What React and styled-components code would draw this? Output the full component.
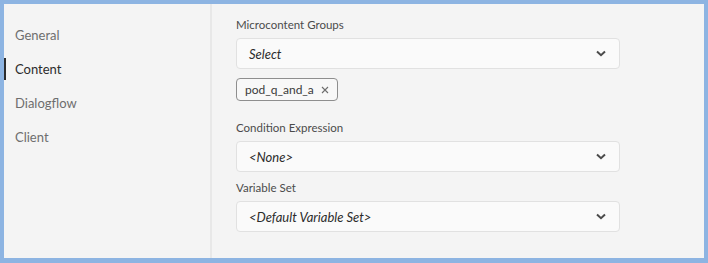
import React from 'react'
import styled, { createGlobalStyle } from 'styled-components'

const GlobalStyle = createGlobalStyle`
  html, body {
    margin: 0;
    padding: 0;
    background: #8db4e2;
  }
  body {
    font-family: Lato, "Noto Sans", sans-serif;
    -webkit-font-smoothing: antialiased;
  }
`

const Frame = styled.div`
  box-sizing: border-box;
  width: 708px;
  height: 263px;
  border: 4px solid #8db4e2;
  border-bottom-width: 5px;
  background: #f4f4f4;
  display: flex;
`

const Sidebar = styled.nav`
  width: 206px;
  flex-shrink: 0;
  border-right: 2px solid #e8e8e8;
  padding-top: 14px;
  display: flex;
  flex-direction: column;
`

const NavItem = styled.div`
  height: 22px;
  margin: 6px 0;
  display: flex;
  align-items: center;
  padding-left: 9px;
  font-size: 13px;
  color: ${p => (p.active ? '#2c2c2c' : '#6e6e6e')};
  border-left: 2px solid ${p => (p.active ? '#2c2c2c' : 'transparent')};
`

const Main = styled.main`
  flex: 1;
  padding: 11px 0 0 24px;
  display: flex;
  flex-direction: column;
`

const Field = styled.div`
  width: 384px;
  display: flex;
  flex-direction: column;
  margin-bottom: ${p => p.gap || 0}px;
`

const Label = styled.div`
  font-size: 11.5px;
  color: #4b4b4b;
  height: 23px;
  line-height: 20px;
`

const SelectBox = styled.div`
  box-sizing: border-box;
  height: 31px;
  background: #fafafa;
  border: 1px solid #e1e1e1;
  border-radius: 4px;
  display: flex;
  align-items: center;
  justify-content: space-between;
  padding: 0 13px 0 12px;
  font-size: 13px;
  font-style: italic;
  color: #2c2c2c;
`

const Tags = styled.div`
  display: flex;
  margin-top: 9px;
`

const Tag = styled.div`
  box-sizing: border-box;
  height: 23px;
  border: 1px solid #8e8e8e;
  border-radius: 4px;
  display: flex;
  align-items: center;
  gap: 7px;
  padding: 0 8px;
  font-size: 12px;
  color: #3a3a3a;
  background: #f8f8f8;
`

const Chevron = () => (
  <svg width="10" height="7" viewBox="0 0 10 7">
    <path d="M1 1.5 L5 5.2 L9 1.5" fill="none" stroke="#4b4b4b" strokeWidth="2" />
  </svg>
)

const Cross = () => (
  <svg width="8" height="8" viewBox="0 0 8 8">
    <path d="M1 1 L7 7 M7 1 L1 7" stroke="#6e6e6e" strokeWidth="1.1" />
  </svg>
)

const Select = ({ value }) => (
  <SelectBox>
    <span>{value}</span>
    <Chevron />
  </SelectBox>
)

export default function App() {
  return (
    <>
      <GlobalStyle />
      <Frame>
        <Sidebar>
          {['General', 'Content', 'Dialogflow', 'Client'].map(n => (
            <NavItem key={n} active={n === 'Content'}>{n}</NavItem>
          ))}
        </Sidebar>
        <Main>
          <Field gap={17}>
            <Label>Microcontent Groups</Label>
            <Select value="Select" />
            <Tags>
              <Tag>pod_q_and_a <Cross /></Tag>
            </Tags>
          </Field>
          <Field gap={6}>
            <Label>Condition Expression</Label>
            <Select value="<None>" />
          </Field>
          <Field>
            <Label>Variable Set</Label>
            <Select value="<Default Variable Set>" />
          </Field>
        </Main>
      </Frame>
    </>
  )
}
